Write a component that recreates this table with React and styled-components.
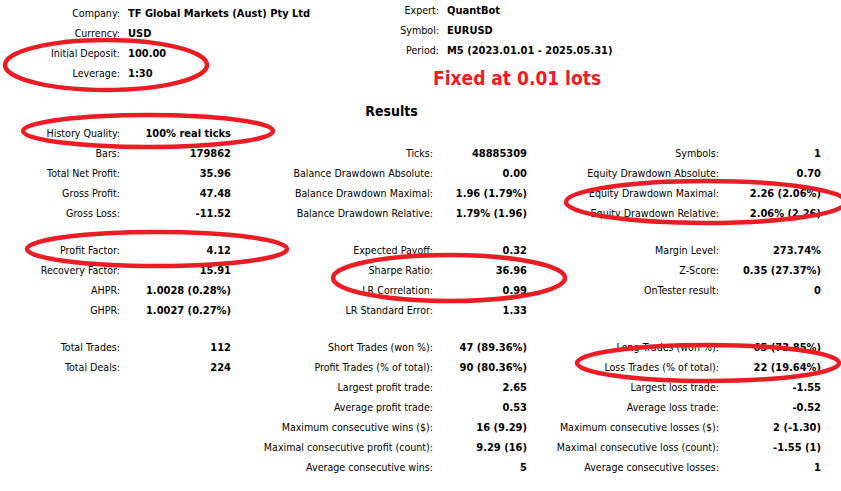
import styled, { createGlobalStyle } from "styled-components";

const GlobalStyle = createGlobalStyle`
  html, body {
    margin: 0;
    padding: 0;
    background: #ffffff;
  }
  body {
    font-family: "DejaVu Sans Condensed", "DejaVu Sans", sans-serif;
    font-size: 11px;
    color: #000000;
  }
`;

const companyInfo = [
  ["Company:", "TF Global Markets (Aust) Pty Ltd"],
  ["Currency:", "USD"],
  ["Initial Deposit:", "100.00"],
  ["Leverage:", "1:30"],
];

const expertInfo = [
  ["Expert:", "QuantBot"],
  ["Symbol:", "EURUSD"],
  ["Period:", "M5 (2023.01.01 - 2025.05.31)"],
];

const sections = [
  [
    ["History Quality:", "100% real ticks", "", "", "", ""],
    ["Bars:", "179862", "Ticks:", "48885309", "Symbols:", "1"],
    ["Total Net Profit:", "35.96", "Balance Drawdown Absolute:", "0.00", "Equity Drawdown Absolute:", "0.70"],
    ["Gross Profit:", "47.48", "Balance Drawdown Maximal:", "1.96 (1.79%)", "Equity Drawdown Maximal:", "2.26 (2.06%)"],
    ["Gross Loss:", "-11.52", "Balance Drawdown Relative:", "1.79% (1.96)", "Equity Drawdown Relative:", "2.06% (2.26)"],
  ],
  [
    ["Profit Factor:", "4.12", "Expected Payoff:", "0.32", "Margin Level:", "273.74%"],
    ["Recovery Factor:", "15.91", "Sharpe Ratio:", "36.96", "Z-Score:", "0.35 (27.37%)"],
    ["AHPR:", "1.0028 (0.28%)", "LR Correlation:", "0.99", "OnTester result:", "0"],
    ["GHPR:", "1.0027 (0.27%)", "LR Standard Error:", "1.33", "", ""],
  ],
  [
    ["Total Trades:", "112", "Short Trades (won %):", "47 (89.36%)", "Long Trades (won %):", "65 (73.85%)"],
    ["Total Deals:", "224", "Profit Trades (% of total):", "90 (80.36%)", "Loss Trades (% of total):", "22 (19.64%)"],
    ["", "", "Largest profit trade:", "2.65", "Largest loss trade:", "-1.55"],
    ["", "", "Average profit trade:", "0.53", "Average loss trade:", "-0.52"],
    ["", "", "Maximum consecutive wins ($):", "16 (9.29)", "Maximum consecutive losses ($):", "2 (-1.30)"],
    ["", "", "Maximal consecutive profit (count):", "9.29 (16)", "Maximal consecutive loss (count):", "-1.55 (1)"],
    ["", "", "Average consecutive wins:", "5", "Average consecutive losses:", "1"],
  ],
];

// hand-drawn highlight rings over the report
const marks = [
  { cx: 106, cy: 65, rx: 101, ry: 25 },
  { cx: 148, cy: 131, rx: 125, ry: 16 },
  { cx: 157, cy: 249, rx: 130, ry: 17 },
  { cx: 449, cy: 278, rx: 116, ry: 23 },
  { cx: 706, cy: 202, rx: 140, ry: 21 },
  { cx: 708, cy: 363, rx: 131, ry: 18 },
];

export default function App() {
  return (
    <Page>
      <GlobalStyle />
      <Header>
        <InfoBlock $labelWidth="120px" $offset="3px" $width="359px">
          {companyInfo.map(([label, value]) => (
            <InfoRow key={label}>
              <InfoLabel>{label}</InfoLabel>
              <InfoValue>{value}</InfoValue>
            </InfoRow>
          ))}
        </InfoBlock>
        <InfoBlock $labelWidth="80px" $offset="0px">
          {expertInfo.map(([label, value]) => (
            <InfoRow key={label}>
              <InfoLabel>{label}</InfoLabel>
              <InfoValue>{value}</InfoValue>
            </InfoRow>
          ))}
          <Note>Fixed at 0.01 lots</Note>
        </InfoBlock>
      </Header>

      <Title>Results</Title>

      <Results>
        {sections.map((rows, s) => (
          <Section key={s}>
            {rows.map((cells, r) => (
              <Row key={r}>
                {cells.map((text, c) =>
                  c % 2 === 0 ? (
                    <Label key={c}>{text}</Label>
                  ) : (
                    <Value key={c}>{text}</Value>
                  )
                )}
              </Row>
            ))}
          </Section>
        ))}
      </Results>

      <Marks width="841" height="491" viewBox="0 0 841 491">
        {marks.map((m, i) => (
          <ellipse
            key={i}
            cx={m.cx}
            cy={m.cy}
            rx={m.rx}
            ry={m.ry}
            fill="none"
            stroke="#ec1c24"
            strokeWidth="4.5"
          />
        ))}
      </Marks>
    </Page>
  );
}

const Page = styled.div`
  position: relative;
  width: 841px;
  height: 491px;
  overflow: hidden;
`;

const Header = styled.div`
  display: flex;
  align-items: flex-start;
  height: 90px;
`;

const InfoBlock = styled.div`
  --label-width: ${(props) => props.$labelWidth};
  width: ${(props) => props.$width || "auto"};
  margin-top: ${(props) => props.$offset};
  display: flex;
  flex-direction: column;
`;

const InfoRow = styled.div`
  display: grid;
  grid-template-columns: var(--label-width) 1fr;
  column-gap: 8px;
  height: 20px;
  align-items: center;
  white-space: nowrap;
`;

const InfoLabel = styled.span`
  text-align: right;
  font-size: 10.6px;
`;

const InfoValue = styled.span`
  font-weight: bold;
`;

const Note = styled.div`
  margin-top: 6px;
  margin-left: 74px;
  height: 24px;
  line-height: 24px;
  color: #ec1c24;
  font-weight: bold;
  font-size: 19px;
  white-space: nowrap;
`;

const Title = styled.div`
  width: 783px;
  margin-top: 11px;
  height: 20px;
  line-height: 20px;
  text-align: center;
  font-weight: bold;
  font-size: 14px;
`;

const Results = styled.div`
  margin-top: 2px;
  display: flex;
  flex-direction: column;
  gap: 17px;
`;

const Section = styled.div`
  display: flex;
  flex-direction: column;
`;

const Row = styled.div`
  display: grid;
  grid-template-columns: 120px 111px 202px 94px 192px 102px;
  height: 20px;
  align-items: center;
  white-space: nowrap;
`;

const Label = styled.span`
  text-align: right;
  font-size: 10.6px;
`;

const Value = styled.span`
  text-align: right;
  font-weight: bold;
`;

const Marks = styled.svg`
  position: absolute;
  left: 0;
  top: 0;
  pointer-events: none;
`;
